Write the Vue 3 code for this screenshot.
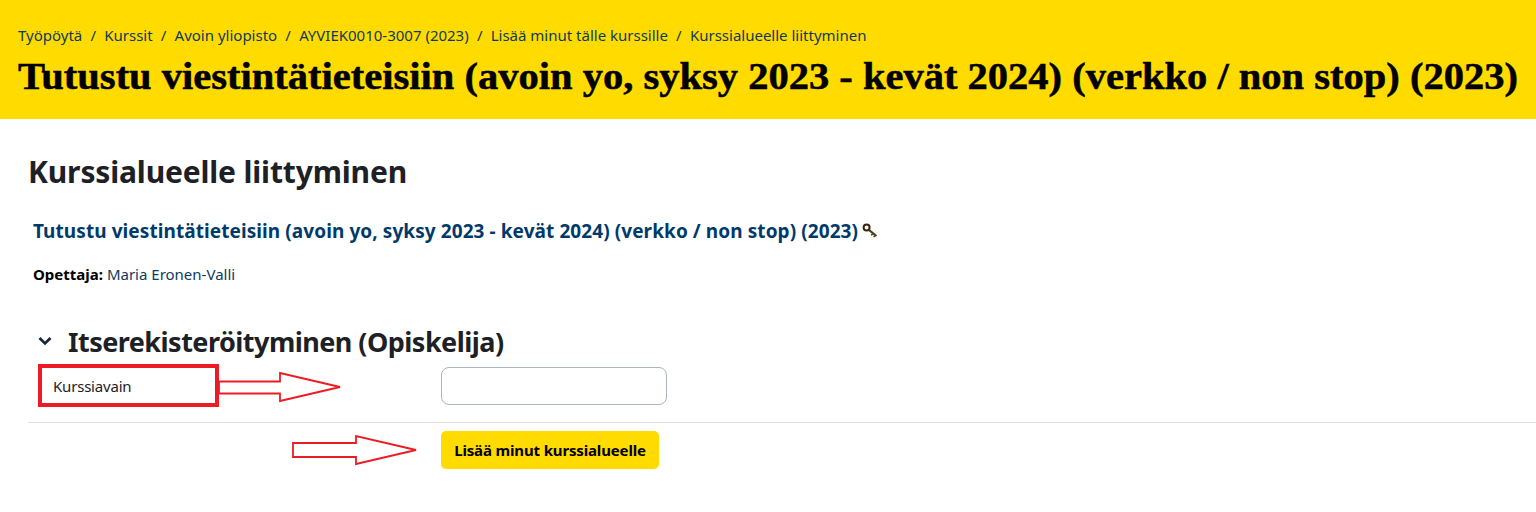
<script setup>
const crumbs = [
  'Työpöytä',
  'Kurssit',
  'Avoin yliopisto',
  'AYVIEK0010-3007 (2023)',
  'Lisää minut tälle kurssille',
  'Kurssialueelle liittyminen',
]
</script>

<template>
  <div class="page">
    <header class="banner">
      <nav class="crumbs">
        <template v-for="(crumb, i) in crumbs" :key="crumb">
          <span v-if="i > 0" class="sep">/</span>
          <a>{{ crumb }}</a>
        </template>
      </nav>
      <h1 class="title">Tutustu viestintätieteisiin (avoin yo, syksy 2023 - kevät 2024) (verkko / non stop) (2023)</h1>
    </header>

    <main class="content">
      <h2 class="heading">Kurssialueelle liittyminen</h2>

      <div class="course">
        <h3 class="course-name">
          <a>Tutustu viestintätieteisiin (avoin yo, syksy 2023 - kevät 2024) (verkko / non stop) (2023)</a>
          <svg class="key" width="16" height="16" viewBox="0 0 16 16" fill="none">
            <circle cx="4.6" cy="4.6" r="3" stroke="#33240c" stroke-width="2" />
            <path d="M6.8 6.8 14.5 13" stroke="#4f3d1c" stroke-width="2.2" />
            <path d="M10.8 10.6 9.2 12.2M13 12.4l-1.4 1.6" stroke="#4f3d1c" stroke-width="1.5" />
          </svg>
        </h3>
        <p class="teacher"><strong>Opettaja:</strong> <a>Maria Eronen-Valli</a></p>
      </div>

      <section class="enrol">
        <div class="section-head">
          <svg class="chevron" width="14" height="10" viewBox="0 0 14 10" fill="none">
            <path d="M1.5 2 7 7.4 12.5 2" stroke="#14293d" stroke-width="2.8" />
          </svg>
          <h3 class="section-title">Itserekisteröityminen (Opiskelija)</h3>
        </div>

        <div class="row key-row">
          <label class="label" for="enrolkey">Kurssiavain</label>
          <input id="enrolkey" class="input" type="text" />
        </div>

        <div class="row submit-row">
          <button class="submit" type="button">Lisää minut kurssialueelle</button>
        </div>

        <div class="label-box"></div>
        <svg class="arrow arrow-one" width="126" height="34" viewBox="0 0 126 34" fill="none">
          <path d="M1 10.5H62V2L122 16 62 30V22.5H1Z" fill="#fff" stroke="#ed1c24" stroke-width="1.8" />
        </svg>
        <svg class="arrow arrow-two" width="130" height="32" viewBox="0 0 130 32" fill="none">
          <path d="M2 8H65V1L125 15 65 29V22H2Z" fill="#fff" stroke="#ed1c24" stroke-width="1.8" />
        </svg>
      </section>
    </main>
  </div>
</template>

<style>
body {
  background: #fff;
}
</style>

<style scoped>
.page {
  width: 1536px;
  height: 512px;
  overflow: hidden;
  background: #fff;
  color: #1d2125;
  font-family: 'Noto Sans', 'Open Sans', sans-serif;
  font-size: 15px;
}

.banner {
  height: 119px;
  box-sizing: border-box;
  padding: 26px 18px 0;
  background: #ffdb00;
}

.crumbs {
  display: flex;
  height: 18px;
  line-height: 18px;
  font-size: 15px;
  color: #0f3a5f;
  white-space: nowrap;
}

.sep {
  margin: 0 8.2px;
}

.title {
  margin: 10px 0 0;
  font-family: 'Liberation Serif', serif;
  font-size: 37px;
  line-height: 46px;
  font-weight: 700;
  color: #000;
  white-space: nowrap;
  -webkit-text-stroke: 0.5px #000;
  transform: scaleX(1.095);
  transform-origin: left center;
}

.content {
  padding: 35px 0 0 28px;
}

.heading {
  margin: 0;
  font-size: 30px;
  line-height: 36px;
  font-weight: 700;
  letter-spacing: -0.15px;
}

.course {
  padding: 29px 0 0 5px;
}

.course-name {
  display: flex;
  align-items: center;
  gap: 4px;
  margin: 0;
  height: 24px;
  font-size: 19px;
  font-weight: 700;
  letter-spacing: 0.08px;
  color: #003a6b;
  white-space: nowrap;
}

.teacher {
  margin: 22px 0 0;
  line-height: 18px;
  color: #0f3a5f;
}

.teacher strong {
  color: #000;
}

.enrol {
  position: relative;
  margin-top: 41px;
}

.section-head {
  display: flex;
  align-items: center;
  height: 34px;
  padding-left: 10px;
}

.chevron {
  margin-right: 16px;
}

.section-title {
  margin: 0;
  font-size: 27px;
  font-weight: 700;
  letter-spacing: -0.53px;
}

.row {
  display: flex;
  align-items: center;
}

.key-row {
  height: 38px;
  margin-top: 7px;
  padding-top: 2px;
  padding-bottom: 17px;
  border-bottom: 1px solid #dee2e6;
}

.label {
  width: 413px;
  padding-left: 25px;
  box-sizing: border-box;
  letter-spacing: -0.2px;
}

.input {
  width: 226px;
  height: 38px;
  box-sizing: border-box;
  border: 1px solid #adb5bd;
  border-radius: 8px;
  background: #fff;
}

.submit-row {
  padding: 8px 0 0 413px;
}

.submit {
  height: 38px;
  width: 218px;
  padding: 0;
  border: 0;
  border-radius: 5px;
  background: #ffdb00;
  color: #000;
  font-family: inherit;
  font-size: 15px;
  font-weight: 700;
  letter-spacing: -0.15px;
}

.label-box {
  position: absolute;
  left: 10px;
  top: 40px;
  width: 181px;
  height: 43px;
  box-sizing: border-box;
  border: 4px solid #ed1c24;
}

.arrow {
  position: absolute;
}

.arrow-one {
  left: 190px;
  top: 47px;
}

.arrow-two {
  left: 263px;
  top: 111px;
}
</style>
